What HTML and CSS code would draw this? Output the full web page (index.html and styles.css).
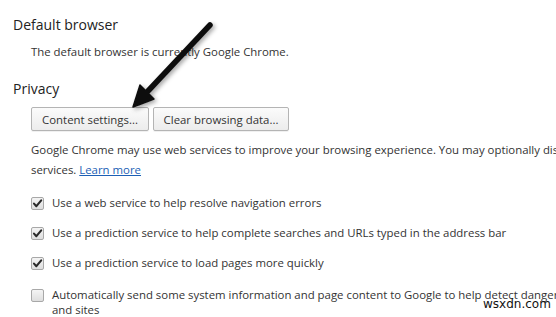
FILE: index.html
```html
<!DOCTYPE html>
<html>
<head>
<meta charset="utf-8">
<link rel="stylesheet" href="styles.css">
</head>
<body>
<div class="page">
  <h2 class="title">Default browser</h2>
  <div class="indent">
    <p class="line first-line">The default browser is currently Google Chrome.</p>
  </div>
  <h2 class="title privacy">Privacy</h2>
  <div class="indent">
    <div class="buttons">
      <button class="btn btn-content">Content settings...</button>
      <button class="btn btn-clear">Clear browsing data...</button>
    </div>
    <p class="para">Google Chrome may use web services to improve your browsing experience. You may optionally disable these<br>services. <a class="link" href="#">Learn more</a></p>
    <div class="options">
      <label class="opt"><span class="cb checked"><svg viewBox="0 0 13 13" class="tick"><path d="M3 6.6 L5.4 9.2 L10.2 3.4" fill="none" stroke="#2a2a2a" stroke-width="2.1" stroke-linecap="round" stroke-linejoin="round"/></svg></span><span class="opt-text">Use a web service to help resolve navigation errors</span></label>
      <label class="opt"><span class="cb checked"><svg viewBox="0 0 13 13" class="tick"><path d="M3 6.6 L5.4 9.2 L10.2 3.4" fill="none" stroke="#2a2a2a" stroke-width="2.1" stroke-linecap="round" stroke-linejoin="round"/></svg></span><span class="opt-text">Use a prediction service to help complete searches and URLs typed in the address bar</span></label>
      <label class="opt"><span class="cb checked"><svg viewBox="0 0 13 13" class="tick"><path d="M3 6.6 L5.4 9.2 L10.2 3.4" fill="none" stroke="#2a2a2a" stroke-width="2.1" stroke-linecap="round" stroke-linejoin="round"/></svg></span><span class="opt-text">Use a prediction service to load pages more quickly</span></label>
      <label class="opt opt-multi"><span class="cb"></span><span class="opt-text">Automatically send some system information and page content to Google to help detect dangerous apps<br>and sites</span></label>
    </div>
  </div>
</div>
<svg class="arrow" width="556" height="317" viewBox="0 0 556 317">
  <defs>
    <filter id="sh" x="-20%" y="-20%" width="140%" height="140%">
      <feDropShadow dx="2" dy="2" stdDeviation="2" flood-color="#000" flood-opacity="0.35"/>
    </filter>
  </defs>
  <g filter="url(#sh)">
    <line x1="210" y1="25" x2="148" y2="91" stroke="#111" stroke-width="5.5" stroke-linecap="round"/>
    <polygon points="133,107 140,85 154,99" fill="#111" stroke="#111" stroke-width="1.5" stroke-linejoin="round"/>
  </g>
</svg>
<div class="watermark">wsxdn.com</div>
</body>
</html>
```
FILE: styles.css
```css
html, body {
  margin: 0;
  padding: 0;
  background: #fff;
  overflow: hidden;
  width: 556px;
  height: 317px;
}
body {
  position: relative;
  font-family: "Open Sans", "Noto Sans", sans-serif;
  color: #333;
  font-size: 11.4px;
}
.page {
  padding: 15px 0 0 13px;
  white-space: nowrap;
}
.title {
  margin: 0;
  font-size: 14px;
  font-weight: normal;
  line-height: 20px;
  color: #222;
}
.privacy {
  margin-top: 17px;
}
.indent {
  padding-left: 18px;
}
.line {
  margin: 7px 0 0;
  line-height: 20px;
}
.buttons {
  display: flex;
  gap: 4px;
  margin-top: 8px;
}
.btn {
  font-family: inherit;
  font-size: 11.4px;
  color: #333;
  height: 24px;
  padding: 0 8px;
  border: 1px solid #b4b4b4;
  border-radius: 2px;
  background: linear-gradient(#fbfbfb, #ececec);
  box-shadow: 0 1px 0 rgba(0,0,0,0.06);
}
.btn-content { width: 118px; }
.btn-clear { width: 136px; }
.para {
  margin: 9px 0 0;
  line-height: 20px;
}
.link {
  color: #1c5fb5;
  text-decoration: underline;
}
.options {
  display: flex;
  flex-direction: column;
  gap: 10px;
  margin-top: 13px;
}
.opt {
  display: flex;
  align-items: center;
  gap: 8px;
  line-height: 20px;
}
.opt-multi {
  align-items: flex-start;
  line-height: 15px;
  margin-top: 4px;
}
.opt-multi .cb {
  margin-top: 2px;
}
.cb {
  flex: none;
  width: 11px;
  height: 11px;
  border: 1px solid #a8a8a8;
  border-radius: 2px;
  background: linear-gradient(#f4f4f4, #dedede);
  position: relative;
}
.tick {
  position: absolute;
  left: -1px;
  top: -1px;
  width: 13px;
  height: 13px;
}
.arrow {
  position: absolute;
  left: 0;
  top: 0;
  pointer-events: none;
}
.watermark {
  position: absolute;
  left: 483px;
  top: 297px;
  font-family: "DejaVu Sans", sans-serif;
  font-size: 12px;
  color: #111;
}
```
